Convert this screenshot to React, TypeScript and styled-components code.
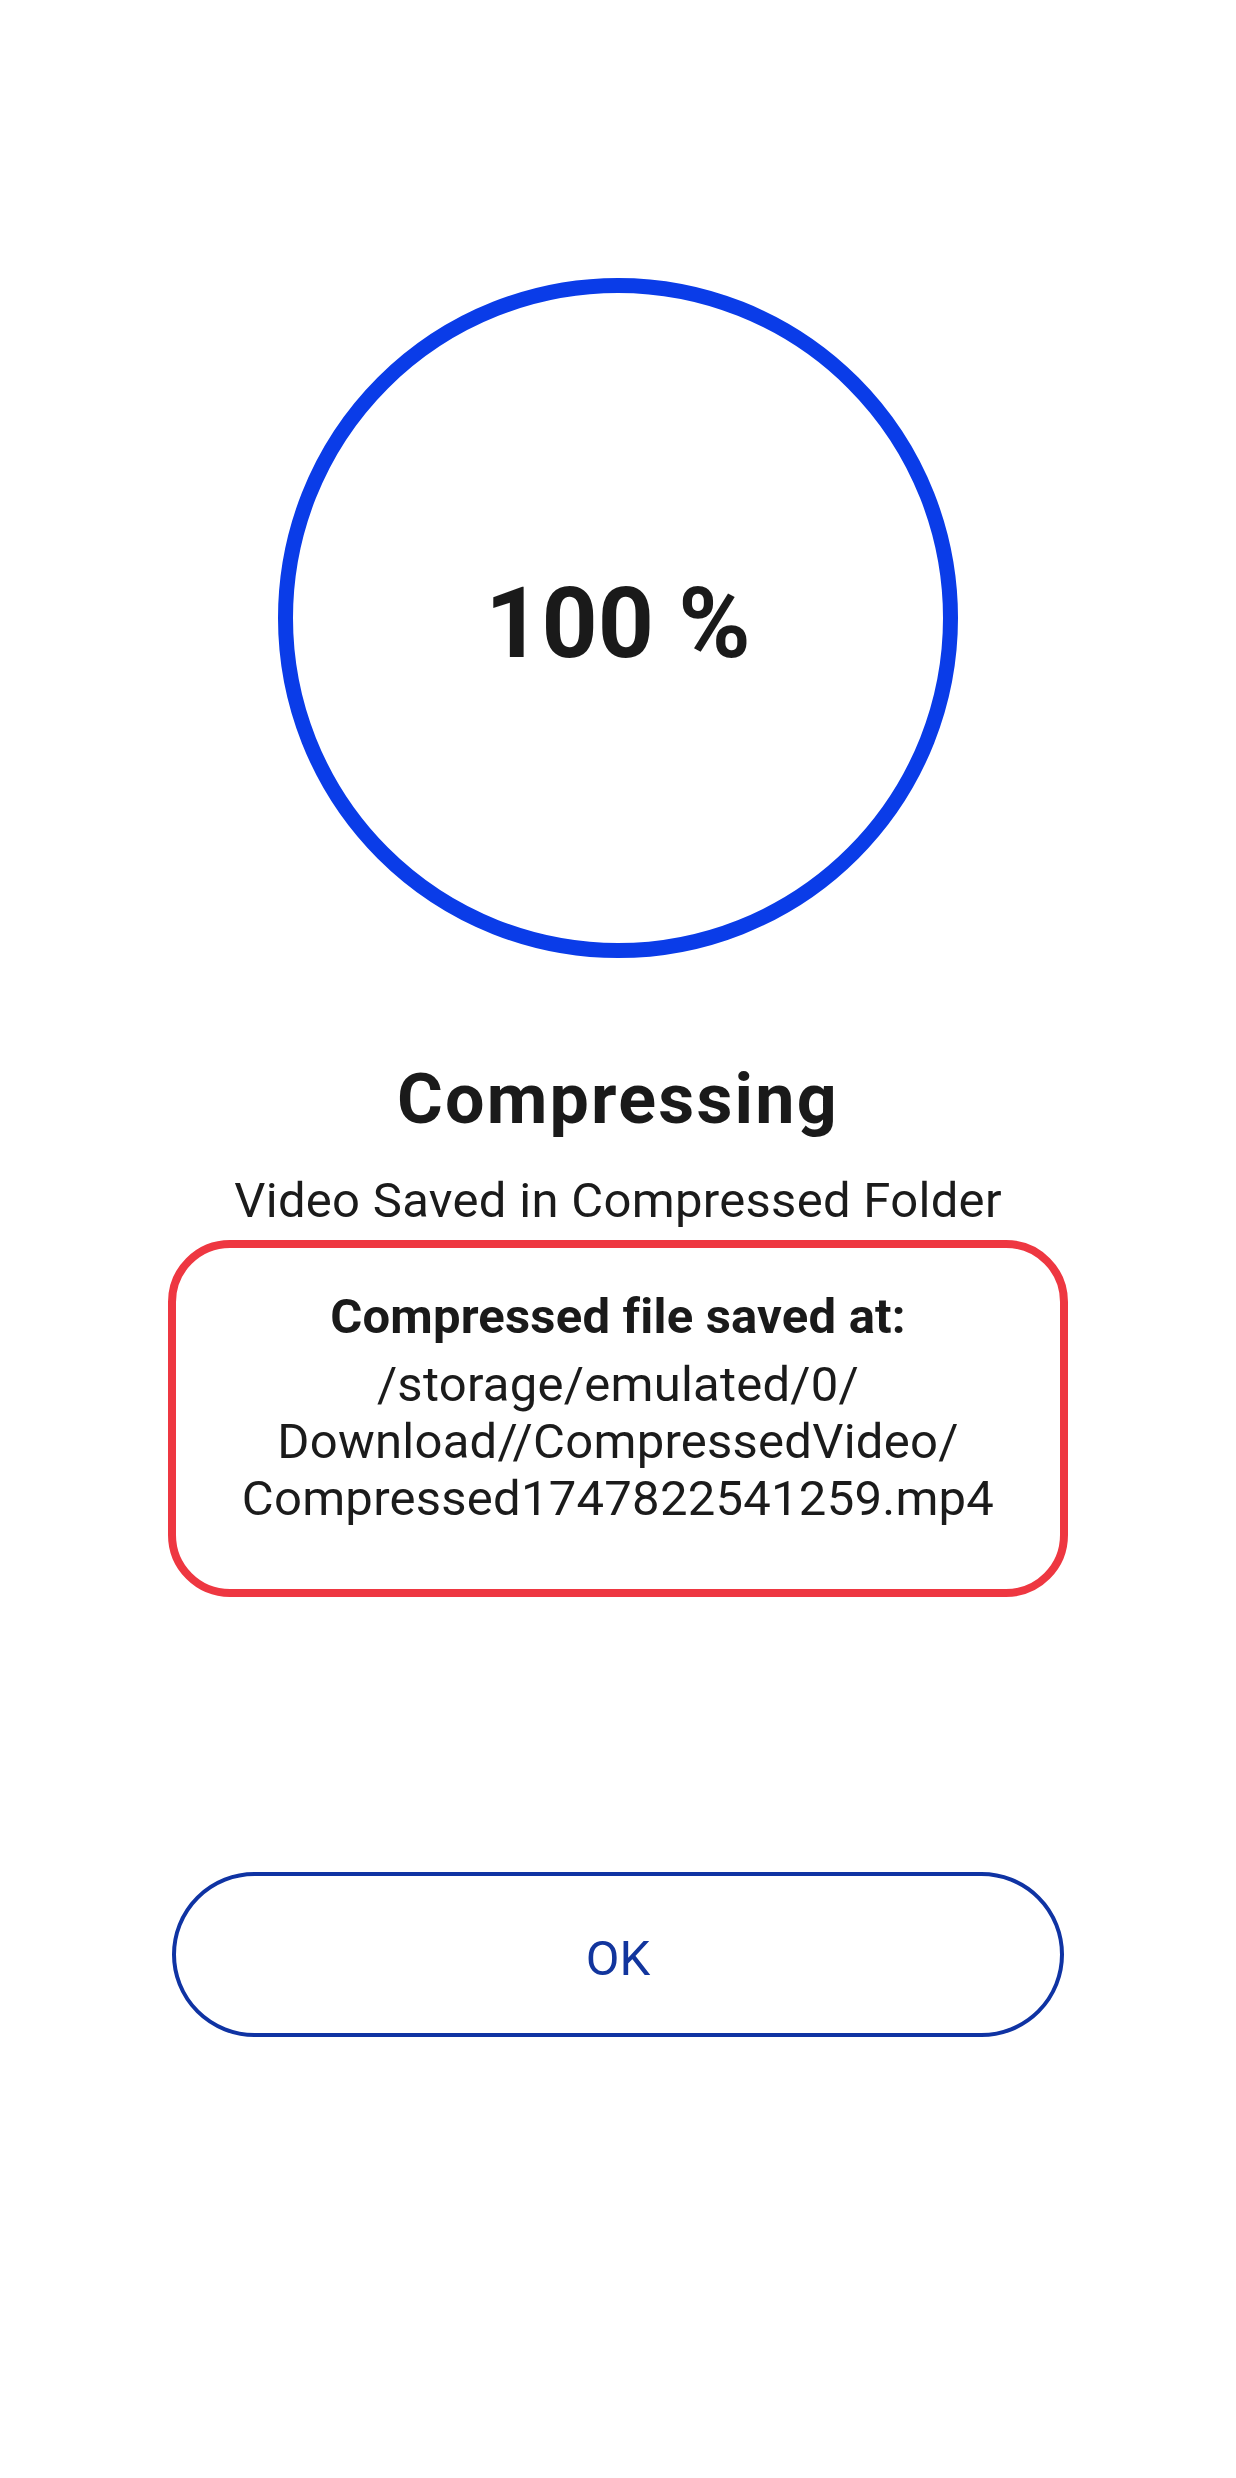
import React from "react";
import styled, { createGlobalStyle } from "styled-components";

const GlobalStyle = createGlobalStyle`
  html, body {
    margin: 0;
    padding: 0;
    background: #ffffff;
  }
  body {
    font-family: Roboto, "Noto Sans", "Liberation Sans", sans-serif;
    color: #1b1b1b;
  }
  * { box-sizing: border-box; }
`;

const Page = styled.main`
  width: 1236px;
  min-height: 2478px;
  display: flex;
  flex-direction: column;
  align-items: center;
  padding-top: 278px;
  background: #ffffff;
`;

const ProgressRing = styled.div`
  width: 680px;
  height: 680px;
  border-radius: 50%;
  border: 15px solid #0a3ce8;
  display: flex;
  align-items: center;
  justify-content: center;
  padding-top: 10px;
`;

const Percent = styled.span`
  font-size: 98px;
  font-weight: 700;
  color: #1a1a1a;
  line-height: normal;
`;

const Title = styled.h1`
  margin: 101px 0 0;
  font-size: 70px;
  line-height: 80px;
  font-weight: 700;
  letter-spacing: 2.2px;
  color: #1a1a1a;
`;

const Subtitle = styled.p`
  margin: 34px 0 0;
  font-size: 49px;
  line-height: 56px;
  font-weight: 400;
  letter-spacing: 0.3px;
  color: #1b1b1b;
`;

const PathCard = styled.section`
  margin-top: 11px;
  width: 900px;
  border: 8px solid #ee3741;
  border-radius: 62px;
  padding: 41px 0 62px;
  display: flex;
  flex-direction: column;
  align-items: center;
  text-align: center;
`;

const CardLabel = styled.div`
  font-size: 49px;
  line-height: 56px;
  font-weight: 700;
  letter-spacing: 0.2px;
  color: #1a1a1a;
  margin-bottom: 11px;
`;

const PathLine = styled.div`
  font-size: 49px;
  line-height: 57px;
  font-weight: 400;
  letter-spacing: 0.25px;
  color: #1b1b1b;
  white-space: nowrap;
`;

const OkButton = styled.button`
  margin-top: 275px;
  width: 892px;
  height: 165px;
  border: 4px solid #0f33a3;
  border-radius: 83px;
  background: #ffffff;
  color: #12359d;
  font-family: Roboto, "Noto Sans", "Liberation Sans", sans-serif;
  font-size: 49px;
  font-weight: 400;
  display: flex;
  align-items: center;
  justify-content: center;
  padding: 8px 0 0;
  cursor: pointer;
`;

const pathLines = [
  "/storage/emulated/0/",
  "Download//CompressedVideo/",
  "Compressed1747822541259.mp4",
];

export default function App() {
  return (
    <>
      <GlobalStyle />
      <Page>
        <ProgressRing>
          <Percent>100 %</Percent>
        </ProgressRing>
        <Title>Compressing</Title>
        <Subtitle>Video Saved in Compressed Folder</Subtitle>
        <PathCard>
          <CardLabel>Compressed file saved at:</CardLabel>
          {pathLines.map((line) => (
            <PathLine key={line}>{line}</PathLine>
          ))}
        </PathCard>
        <OkButton>OK</OkButton>
      </Page>
    </>
  );
}
